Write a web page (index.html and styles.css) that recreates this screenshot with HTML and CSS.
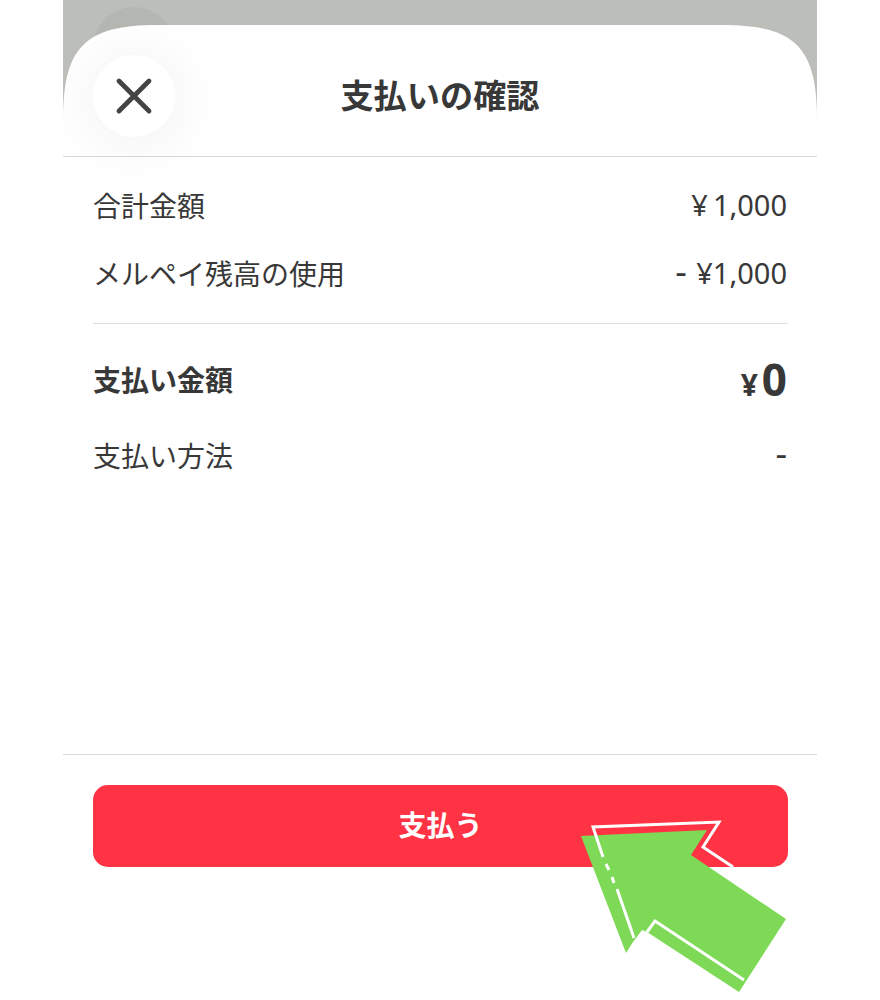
FILE: index.html
```html
<!DOCTYPE html>
<html lang="ja">
<head>
<meta charset="utf-8">
<title>支払いの確認</title>
<link rel="stylesheet" href="styles.css">
</head>
<body>
<div class="screen">
  <div class="ghost"></div>
  <main class="sheet">
    <header class="head">
      <button class="close" aria-label="閉じる">
        <svg width="38" height="38" viewBox="0 0 38 38"><path d="M4 4L34 34M34 4L4 34" fill="none" stroke="#444" stroke-width="4.8" stroke-linecap="round"/></svg>
      </button>
      <h1 class="title">支払いの確認</h1>
    </header>
    <section class="content">
      <div class="group top">
        <div class="row"><span>合計金額</span><span class="num">¥<i class="sp"></i>1,000</span></div>
        <div class="row"><span>メルペイ残高の使用</span><span class="num"><span class="dash minus">-</span> ¥1,000</span></div>
      </div>
      <div class="group">
        <div class="row total"><span class="total-label">支払い金額</span><span class="amount"><small>¥</small>0</span></div>
        <div class="row r4"><span>支払い方法</span><span class="num"><span class="dash">-</span></span></div>
      </div>
    </section>
    <footer class="foot">
      <button class="pay">支払う</button>
    </footer>
  </main>
</div>
<svg class="arrow" width="230" height="190" viewBox="570 810 230 190">
  <polygon class="arrow-fill" points="581,836 707,830 691,855 786,919 739,992 647,932 642,930 633,942 626,953"/>
  <path class="arrow-line" d="M603,857L593,827L719,822L703,847L733,867M606,864L609,870M612,877L614,883M617,889L634,938M647,932L655,921L744,980"/>
</svg>
</body>
</html>
```

FILE: styles.css
```css
* { box-sizing: border-box; }
html, body { margin: 0; padding: 0; height: 1000px; overflow: hidden; background: #fff; }
body {
  position: relative;
  font-family: "Noto Sans CJK JP", "Noto Sans", sans-serif;
  color: #383838;
}
.screen {
  position: relative;
  margin-left: 63px;
  width: 754px;
  height: 1000px;
  padding-top: 25px;
  background: #bcbfb9;
}
.ghost {
  position: absolute;
  left: 30px;
  top: 7px;
  width: 82px;
  height: 82px;
  border-radius: 50%;
  background: #b4b7b1;
}
.sheet {
  position: relative;
  height: 975px;
  display: flex;
  flex-direction: column;
  background: #fff;
  clip-path: path("M0 95C0 22 22 0 95 0L659 0C732 0 754 22 754 95L754 975L0 975Z");
}
.head {
  position: relative;
  height: 132px;
  flex: none;
  padding: 30px 30px 0;
  display: flex;
  justify-content: center;
  border-bottom: 1px solid #d9d9d9;
}
.close {
  position: absolute;
  left: 30px;
  top: 30px;
  width: 82px;
  height: 82px;
  padding: 0;
  border: 0;
  border-radius: 50%;
  background: #fff;
  display: flex;
  align-items: center;
  justify-content: center;
  box-shadow: 0 4px 64px rgba(0, 0, 0, .07);
}
.title {
  margin: 0;
  font-size: 33.2px;
  line-height: 78px;
  font-weight: 700;
}
.content {
  flex: 1;
  padding: 0 30px;
}
.group.top {
  margin-right: -1px;
  padding: 14px 1px 16px 0;
  border-bottom: 1px solid #ddd;
}
.row {
  height: 68px;
  display: flex;
  align-items: center;
  justify-content: space-between;
  font-size: 28px;
  line-height: 40px;
}
.num { font-family: "Noto Sans", sans-serif; font-size: 29px; }
.dash { font-size: 36px; line-height: 30px; }
.minus { margin-right: 2px; }
.sp { display: inline-block; width: 5px; }
.total { height: 112px; font-weight: 700; }
.total-label { margin-bottom: 3px; }
.r4 { height: 37px; }
.amount {
  margin-top: 3px;
  font-family: "Noto Sans", sans-serif;
  font-size: 44px;
  font-weight: 700;
  line-height: 40px;
}
.amount small { font-size: 30px; margin-right: 4px; }
.foot {
  flex: none;
  height: 246px;
  padding: 30px 29px 0 30px;
  border-top: 1px solid #d9d9d9;
}
.pay {
  display: block;
  width: 100%;
  height: 82px;
  padding: 0 0 4px;
  border: 0;
  border-radius: 15px;
  background: #ff3344;
  color: #fff;
  font-family: inherit;
  font-size: 28px;
  font-weight: 700;
}
.arrow { position: absolute; left: 570px; top: 810px; }
.arrow-fill { fill: #7ed957; }
.arrow-line { fill: none; stroke: #fff; stroke-width: 3; }
```
